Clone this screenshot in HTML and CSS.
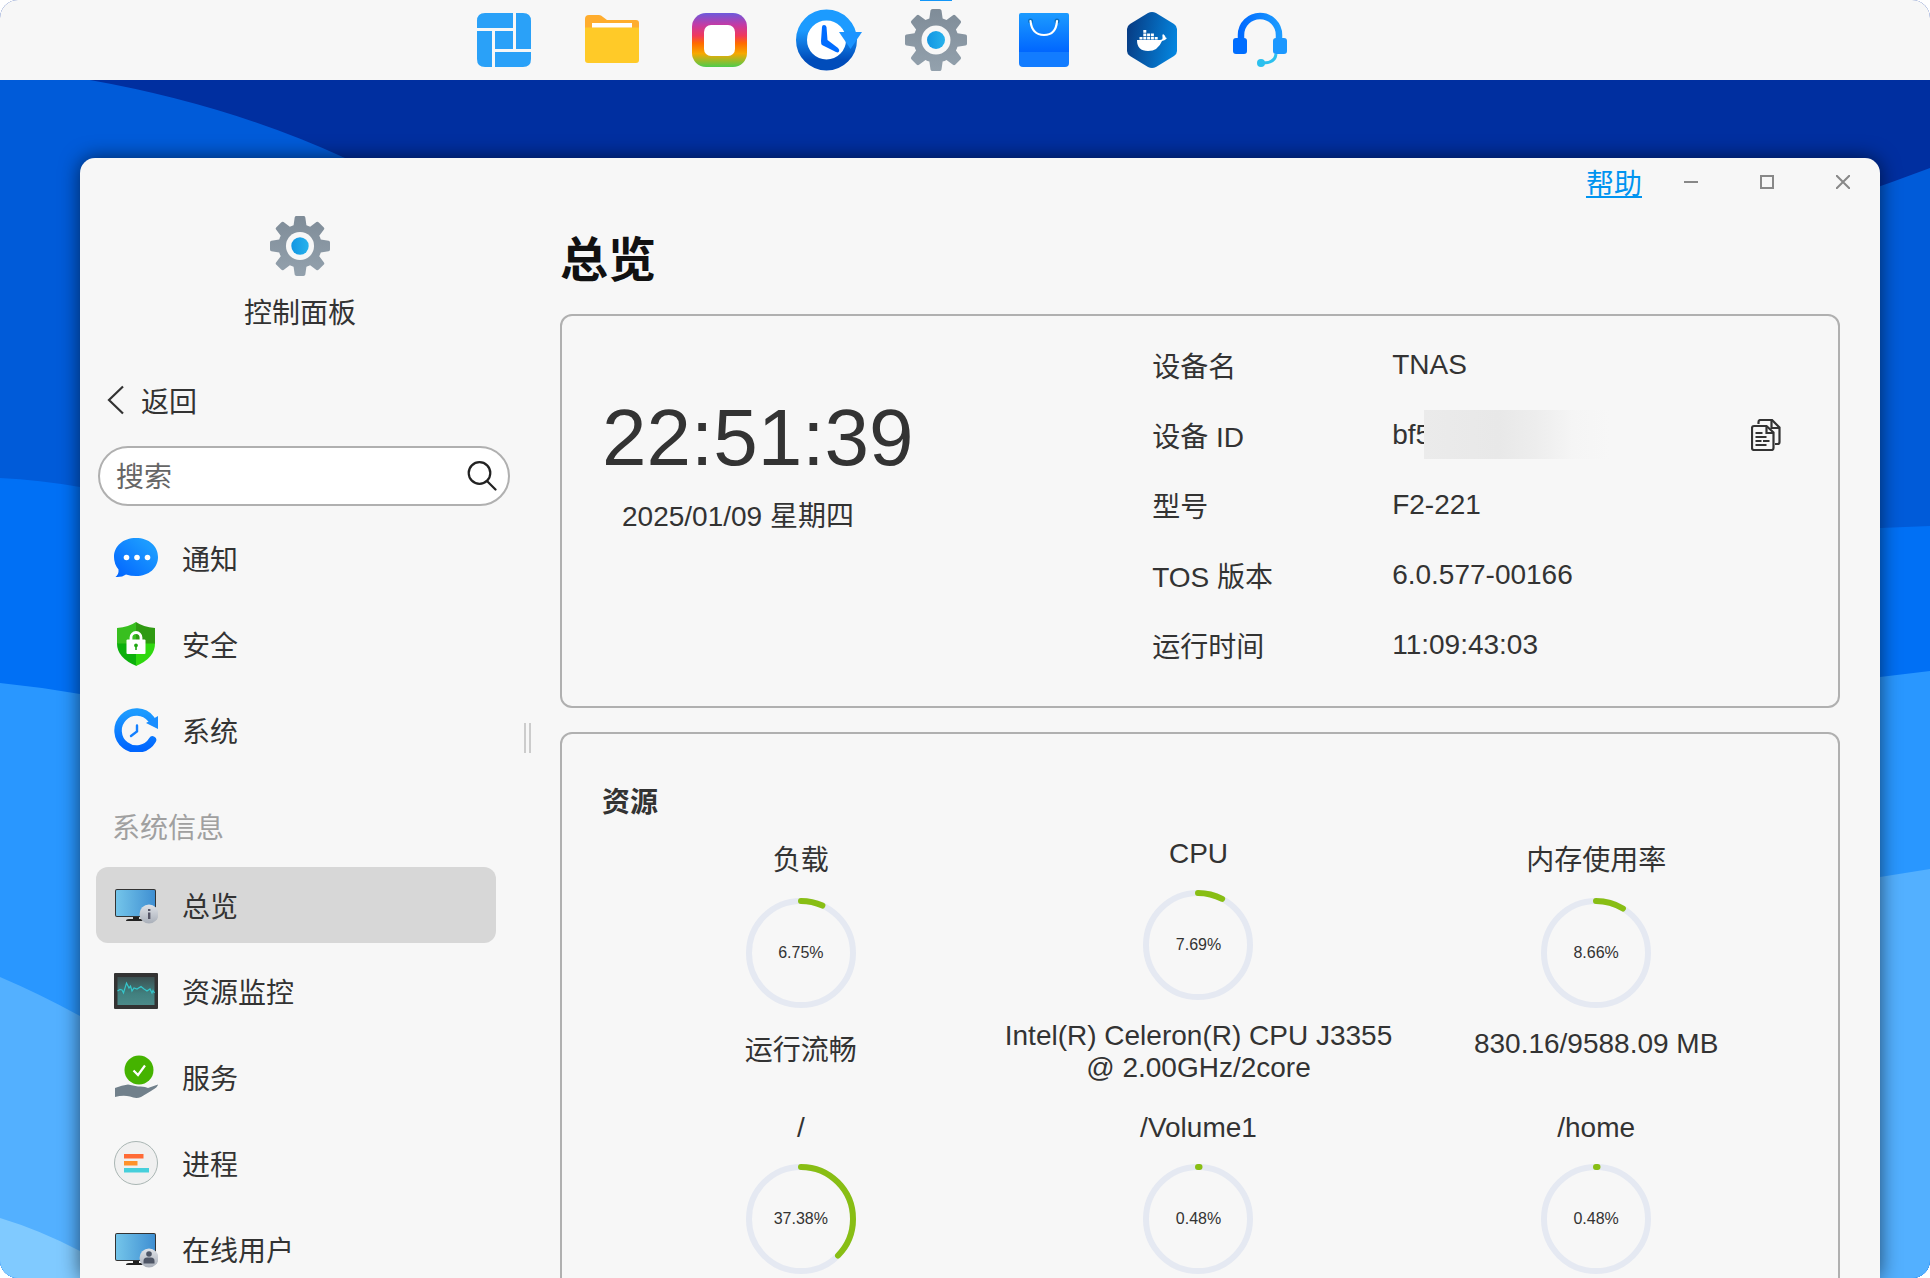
FILE: index.html
```html
<!DOCTYPE html>
<html lang="zh-CN">
<head>
    <meta charset="UTF-8">
    <meta name="viewport" content="width=device-width, initial-scale=1.0">
    <title>控制面板</title>
    <link rel="stylesheet" href="styles.css">
</head>
<body>

<!-- Shared gradients and symbols -->
<svg class="defs" width="0" height="0" aria-hidden="true">
    <defs>
        <linearGradient id="gGear" x1="0" y1="0" x2="0" y2="1"><stop offset="0" stop-color="#7f8c98"/><stop offset="1" stop-color="#93a1ad"/></linearGradient>
        <linearGradient id="gDot"><stop offset="0" stop-color="#1296e3"/><stop offset="1" stop-color="#28b2ec"/></linearGradient>
        <linearGradient id="gBlue" x1="0" y1="0" x2="0" y2="1"><stop offset="0" stop-color="#1c9bff"/><stop offset="1" stop-color="#0066ff"/></linearGradient>
        <linearGradient id="gBlueH"><stop offset="0" stop-color="#006aff"/><stop offset="1" stop-color="#1c9bff"/></linearGradient>
        <linearGradient id="gBubble" x1="0" y1="1" x2="1" y2="0"><stop offset="0" stop-color="#0062ff"/><stop offset=".8" stop-color="#1c9bff"/></linearGradient>
        <linearGradient id="gScreen"><stop offset="0" stop-color="#74c5ea"/><stop offset="1" stop-color="#3f8fd2"/></linearGradient>
        <linearGradient id="gBadge" x1="0" y1="0" x2="0" y2="1"><stop offset="0" stop-color="#e0e3e8"/><stop offset="1" stop-color="#a9afb9"/></linearGradient>
        <clipPath id="gearShape">
            <circle cx="31" cy="31" r="22.500"/>
            <path d="M24 12L25.500 1.500Q25.700 0 27.500 0H34.500Q36.300 0 36.500 1.500L38 12V50L36.500 60.500Q36.300 62 34.500 62H27.500Q25.700 62 25.500 60.500L24 50z"/>
            <path transform="rotate(90 31 31)" d="M24 12L25.500 1.500Q25.700 0 27.500 0H34.500Q36.300 0 36.500 1.500L38 12V50L36.500 60.500Q36.300 62 34.500 62H27.500Q25.700 62 25.500 60.500L24 50z"/>
            <path transform="rotate(45 31 31)" d="M24 12L25.500 1.500Q25.700 0 27.500 0H34.500Q36.300 0 36.500 1.500L38 12V50L36.500 60.500Q36.300 62 34.500 62H27.500Q25.700 62 25.500 60.500L24 50z"/>
            <path transform="rotate(135 31 31)" d="M24 12L25.500 1.500Q25.700 0 27.500 0H34.500Q36.300 0 36.500 1.500L38 12V50L36.500 60.500Q36.300 62 34.500 62H27.500Q25.700 62 25.500 60.500L24 50z"/>
        </clipPath>
        <symbol id="gear" viewBox="0 0 62 62">
            <rect width="62" height="62" fill="url(#gGear)" clip-path="url(#gearShape)"/>
            <circle cx="31" cy="31" r="14.500" fill="#f7f7f7"/>
            <circle cx="31" cy="31" r="9" fill="url(#gDot)"/>
        </symbol>
        <symbol id="monitor" viewBox="0 0 44 44">
            <path d="M19 33h6v3h4q3 0 3 2H12q0-2 3-2h4z" fill="#222"/>
            <rect x="1" y="6" width="41" height="28" rx="2" fill="#333"/>
            <rect x="2" y="7" width="39" height="26" rx="1" fill="url(#gScreen)"/>
            <circle cx="35" cy="31" r="9.500" fill="url(#gBadge)"/>
        </symbol>
    </defs>
</svg>

<div class="desktop">
    <svg class="wallpaper" viewBox="0 0 1930 1278" preserveAspectRatio="none" aria-hidden="true">
        <rect width="1930" height="1278" fill="#002fa0"/>
        <path fill="#005bd9" d="M0 70H50Q90 80 90 80Q230 105 345 158Q700 330 1100 330Q1500 330 1930 168V1278H0z"/>
        <path fill="#0070f5" d="M0 478Q40 480 80 487Q900 620 1880 528L1930 526V1278H0z"/>
        <path fill="#2997ff" d="M0 683Q40 687 80 694Q900 850 1880 677L1930 671V1278H0z"/>
        <path fill="#53b0ff" d="M0 977Q40 994 80 1016Q900 1200 1880 877L1930 869V1278H0z"/>
        <path fill="#80caff" d="M0 1218Q40 1230 80 1251L180 1278H0z"/>
    </svg>

    <header class="taskbar">
        <button class="app" aria-label="桌面">
            <svg viewBox="0 0 66 66"><g fill="#2aa1f8">
                <path d="M14 6H42V21H6V14Q6 6 14 6zM45 6H52Q60 6 60 14V42H45zM6 24H21V60H14Q6 60 6 52zM24 24H42V42H24zM24 45H60V52Q60 60 52 60H24z"/>
            </g></svg>
        </button>
        <button class="app" aria-label="文件管理">
            <svg viewBox="0 0 66 66">
                <path d="M6 12Q6 8 10 8H20Q22 8 24 10L28 13H57Q60 13 60 16V30H6z" fill="#ffad2e"/>
                <path d="M6 20.500H60V53Q60 56 57 56H9Q6 56 6 53z" fill="#ffca28"/>
                <rect x="13" y="16" width="40" height="4.500" fill="#fff"/>
            </svg>
        </button>
        <button class="app" aria-label="相册">
            <svg viewBox="0 0 66 66">
                <linearGradient id="gPhoto" x1="0" y1="0" x2="0" y2="1">
                    <stop offset="0" stop-color="#6c5adb"/><stop offset=".22" stop-color="#c43aa5"/><stop offset=".42" stop-color="#f0395c"/><stop offset=".56" stop-color="#ff6a00"/><stop offset=".75" stop-color="#f7a800"/><stop offset="1" stop-color="#4dcc4d"/>
                </linearGradient>
                <rect x="5" y="6" width="55" height="54" rx="14" fill="url(#gPhoto)"/>
                <rect x="17" y="18" width="31" height="31" rx="7" fill="#fff"/>
            </svg>
        </button>
        <button class="app" aria-label="备份">
            <svg viewBox="0 0 66 66">
                <linearGradient id="gBackup" x1="0" y1="0" x2="0" y2="1"><stop offset=".3" stop-color="#1c9bff"/><stop offset=".9" stop-color="#004cba"/></linearGradient>
                <circle cx="31.500" cy="33" r="25" fill="#fff" stroke="url(#gBackup)" stroke-width="11"/>
                <path d="M44 25H67L55.500 42z" fill="#1c94ff"/>
                <path d="M27 20Q27 18 29 18T31.500 20L32.500 33L43 41Q45 43 44 44.500T41 45L27 38Q26 37 26 34z" fill="#006cff"/>
            </svg>
        </button>
        <button class="app app-active" aria-label="控制面板">
            <svg viewBox="-2 -2 66 66"><use href="#gear" width="62" height="62"/></svg>
        </button>
        <button class="app" aria-label="应用中心">
            <svg viewBox="0 0 66 66">
                <path d="M8 8Q8 6 10 6H56Q58 6 58 8V45H8z" fill="url(#gBlue)"/>
                <path d="M8 45H58V56Q58 60 54 60H12Q8 60 8 56z" fill="#127cff"/>
                <g fill="#0b6fc0"><circle cx="19.500" cy="14" r="2.500"/><circle cx="46" cy="14" r="2.500"/></g>
                <path d="M19.500 14Q21 28 33 28T46 14" fill="none" stroke="#fff" stroke-width="2.200" stroke-linecap="round"/>
            </svg>
        </button>
        <button class="app" aria-label="Docker">
            <svg viewBox="0 0 66 66">
                <linearGradient id="gDocker" y1=".4" y2=".6"><stop offset="0" stop-color="#073d85"/><stop offset="1" stop-color="#0486e0"/></linearGradient>
                <path d="M29 6Q33 4 37 6L55 17Q58 19 58 22V44Q58 47 55 49L37 60Q33 62 29 60L11 49Q8 47 8 44V22Q8 19 11 17z" fill="url(#gDocker)"/>
                <path d="M18 33H41Q44 33 43.500 30Q43 28 44 27Q46 28 47 31Q48 30.500 48 31Q46 34 43 34Q39 44 29 44Q18 44 18 33z" fill="#fff"/>
                <g fill="#fff"><path d="M20.500 30h3v2.500h-3zM24.300 30h3v2.500h-3zM28.100 30h3v2.500h-3zM31.900 30h3v2.500h-3zM35.700 30h3v2.500h-3zM24.300 26.500h3v2.800h-3zM28.100 26.500h3v2.800h-3zM31.900 26.500h3v2.800h-3zM24.300 23h3v2.800h-3z"/></g>
            </svg>
        </button>
        <button class="app" aria-label="技术支持">
            <svg viewBox="0 0 66 66">
                <path d="M14 32V28A19 19 0 0 1 52 28V32" fill="none" stroke="url(#gBlueH)" stroke-width="6.500"/>
                <rect x="6" y="31" width="14" height="16" rx="3" fill="#006eff"/>
                <rect x="46" y="31" width="14" height="16" rx="3" fill="#1c98ff"/>
                <path d="M49 47Q48 56 36 56" fill="none" stroke="#2cc0ee" stroke-width="3"/>
                <circle cx="34" cy="56" r="4" fill="#2cc0ee"/>
            </svg>
        </button>
    </header>

    <div class="window">
        <aside class="sidebar">
            <div class="brand">
                <svg class="brand-icon"><use href="#gear"/></svg>
                <div>控制面板</div>
            </div>

            <button class="back">
                <svg width="18" height="30" viewBox="0 0 18 30"><path d="M16 1.500L2 15L16 28.500" fill="none" stroke="#333" stroke-width="2.200"/></svg>
                返回
            </button>

            <div class="search">
                <input type="text" placeholder="搜索" aria-label="搜索">
                <svg width="30" height="30" viewBox="0 0 30 30" fill="none" stroke="#222" stroke-width="2.200" stroke-linecap="round"><circle cx="12.500" cy="12" r="10.800"/><path d="M20 20L28.500 28.500"/></svg>
            </div>

            <nav class="menu">
                <a href="#">
                    <svg viewBox="0 0 44 44"><path d="M22 2C35 2 44 10 44 21S35 40 22 40Q17 40 12 38.500Q8 41.500 1.500 41Q5 38 4.500 33.500Q0 28 0 21C0 10 9 2 22 2z" fill="url(#gBubble)"/><g fill="#fff"><circle cx="12.500" cy="21.500" r="2.800"/><circle cx="23" cy="21.500" r="2.800"/><circle cx="33.500" cy="21.500" r="2.800"/></g></svg>
                    通知
                </a>
                <a href="#">
                    <svg viewBox="0 0 44 44">
                        <path d="M22 0Q15 5 3 6V22H22z" fill="#38bf1f"/><path d="M22 0Q29 5 41 6V22H22z" fill="#2f9a12"/>
                        <path d="M3 21.500H22.500V44Q3 36 3 21.500z" fill="#0cb00c"/><path d="M41 21.500H22V44Q41 36 41 21.500z" fill="#2fd80f"/>
                        <rect x="12.500" y="17.500" width="19" height="14.500" rx="1" fill="#fff"/>
                        <path d="M17 18V15.500A5 5 0 0 1 27 15.500V18" fill="none" stroke="#fff" stroke-width="2.800"/>
                        <path d="M22 21.500a2 2 0 0 1 .8 3.800V28h-1.600V25.300A2 2 0 0 1 22 21.500z" fill="#1fa812"/>
                    </svg>
                    安全
                </a>
                <a href="#">
                    <svg viewBox="0 0 44 44">
                        <path d="M37 11A18.500 18.500 0 1 0 38.500 32" fill="none" stroke="url(#gBlue)" stroke-width="7.500" stroke-linecap="round"/>
                        <path d="M32 15L44 8V21z" fill="#1a8eff"/>
                        <path d="M23 17.500V23.500L17 28" fill="none" stroke="#1480ff" stroke-width="2.400" stroke-linecap="round"/>
                    </svg>
                    系统
                </a>
                <h3>系统信息</h3>
                <a href="#" class="active">
                    <svg viewBox="0 0 44 44"><use href="#monitor"/><path d="M34 26h2.400v2H34zM34 29.500h2.400V36H34z" fill="#556"/></svg>
                    总览
                </a>
                <a href="#">
                    <svg viewBox="0 0 44 44">
                        <linearGradient id="gMon" x1="0" y1="0" x2="0" y2="1"><stop offset="0" stop-color="#3c4f50"/><stop offset=".6" stop-color="#41807f"/><stop offset="1" stop-color="#4b8a89"/></linearGradient>
                        <rect y="4" width="44" height="36" rx="1" fill="#333"/><rect x="3.500" y="8" width="37" height="28" fill="url(#gMon)"/>
                        <path d="M3.500 22L6 20.500L8 21L9.500 24L12.500 14L15 19L16.500 17L18 22L20 19L23 20L27 17.500L30 20L33 22L36 20L38 24L39 21.500L40.500 24" fill="none" stroke="#35c6cb" stroke-width="1.200"/>
                    </svg>
                    资源监控
                </a>
                <a href="#">
                    <svg viewBox="0 0 44 44">
                        <circle cx="25" cy="15" r="14.500" fill="#45b300"/><path d="M19.500 15.500L24 20L31 10.500" fill="none" stroke="#fff" stroke-width="2.200"/>
                        <path d="M1 33Q8 30 14 29.500L24 31.500Q31 31 34 33L44 29.500Q44 32 37 36L27 42Q22 44 16 41.500Q9 40 1 42z" fill="#71808b"/>
                    </svg>
                    服务
                </a>
                <a href="#">
                    <svg viewBox="0 0 44 44"><circle cx="22" cy="22" r="21.500" fill="#f0f0f0" stroke="#a9b5b3"/><path d="M10 13h19.500v4.500H10z" fill="#ff6a35"/><path d="M10 20h13.500v4.500H10z" fill="#ff922b"/><path d="M10 27h25v4.500H10z" fill="#46cfdb"/></svg>
                    进程
                </a>
                <a href="#">
                    <svg viewBox="0 0 44 44"><use href="#monitor"/><g fill="#4e5565"><circle cx="35" cy="27" r="2.800"/><path d="M29.500 36.500V34Q29.500 30.500 33 30.500H37Q40.500 30.500 40.500 34V36.500z"/></g></svg>
                    在线用户
                </a>
            </nav>
        </aside>

        <div class="splitter"></div>

        <main class="main">
            <div class="titlebar">
                <a href="#" class="help">帮助</a>
                <div class="controls">
                    <button aria-label="最小化"><svg viewBox="0 0 14 14"><path d="M0 7H14"/></svg></button>
                    <button aria-label="最大化"><svg viewBox="0 0 14 14"><path d="M1 1H13V13H1z"/></svg></button>
                    <button aria-label="关闭"><svg viewBox="0 0 14 14"><path d="M0 0L14 14M14 0L0 14"/></svg></button>
                </div>
            </div>

            <div class="content">
                <h1>总览</h1>

                <section class="card device">
                    <div class="clock">
                        <div class="time">22:51:39</div>
                        <div class="date">2025/01/09 星期四</div>
                    </div>
                    <dl class="info">
                        <div><dt>设备名</dt><dd>TNAS</dd></div>
                        <div>
                            <dt>设备 ID</dt>
                            <dd class="device-id">bf5</dd>
                            <dd class="copy-cell">
                                <button class="copy" aria-label="复制">
                                    <svg viewBox="0 0 30 32" fill="none" stroke="#333" stroke-width="2.200">
                                        <path d="M7.500 5V3Q7.500 1 9.500 1H21L28.500 8.500V23Q28.500 25 26.500 25H24"/><path d="M20.500 1.500V9H28"/>
                                        <path d="M3 7H15.500L22.500 13.500V29Q22.500 31 20.500 31H3Q1 31 1 29V9Q1 7 3 7z" fill="#f7f7f7"/><path d="M15.500 7.500V14H22"/>
                                        <path d="M4.500 14H11.500M4.500 18H15.500M4.500 22H10.500M12 22H18.500M4.500 26H15.500"/>
                                    </svg>
                                </button>
                            </dd>
                        </div>
                        <div><dt>型号</dt><dd>F2-221</dd></div>
                        <div><dt>TOS 版本</dt><dd>6.0.577-00166</dd></div>
                        <div><dt>运行时间</dt><dd>11:09:43:03</dd></div>
                    </dl>
                </section>

                <section class="card resources">
                    <h2>资源</h2>
                    <div class="gauges">
                        <div class="gauge">
                            <div>负载</div>
                            <div class="ring"><svg viewBox="0 0 110 110"><circle cx="55" cy="55" r="52"/><circle class="value" cx="55" cy="55" r="52" pathLength="100" stroke-dasharray="6.75 100"/></svg><span>6.75%</span></div>
                            <div>运行流畅</div>
                        </div>
                        <div class="gauge">
                            <div>CPU</div>
                            <div class="ring"><svg viewBox="0 0 110 110"><circle cx="55" cy="55" r="52"/><circle class="value" cx="55" cy="55" r="52" pathLength="100" stroke-dasharray="7.69 100"/></svg><span>7.69%</span></div>
                            <div>Intel(R) Celeron(R) CPU J3355 @ 2.00GHz/2core</div>
                        </div>
                        <div class="gauge">
                            <div>内存使用率</div>
                            <div class="ring"><svg viewBox="0 0 110 110"><circle cx="55" cy="55" r="52"/><circle class="value" cx="55" cy="55" r="52" pathLength="100" stroke-dasharray="8.66 100"/></svg><span>8.66%</span></div>
                            <div>830.16/9588.09 MB</div>
                        </div>
                        <div class="gauge">
                            <div>/</div>
                            <div class="ring"><svg viewBox="0 0 110 110"><circle cx="55" cy="55" r="52"/><circle class="value" cx="55" cy="55" r="52" pathLength="100" stroke-dasharray="37.38 100"/></svg><span>37.38%</span></div>
                        </div>
                        <div class="gauge">
                            <div>/Volume1</div>
                            <div class="ring"><svg viewBox="0 0 110 110"><circle cx="55" cy="55" r="52"/><circle class="value" cx="55" cy="55" r="52" pathLength="100" stroke-dasharray="0.48 100"/></svg><span>0.48%</span></div>
                        </div>
                        <div class="gauge">
                            <div>/home</div>
                            <div class="ring"><svg viewBox="0 0 110 110"><circle cx="55" cy="55" r="52"/><circle class="value" cx="55" cy="55" r="52" pathLength="100" stroke-dasharray="0.48 100"/></svg><span>0.48%</span></div>
                        </div>
                    </div>
                </section>
            </div>
        </main>
    </div>
</div>

</body>
</html>
```

FILE: styles.css
```css
* {
    box-sizing: border-box;
}
body {
    margin: 0;
    background-color: #ffffff;
    font-family: "Liberation Sans", "Noto Sans CJK SC", sans-serif;
    font-size: 28px;
    color: #333333;
}
h1, h2, h3, dl, dd {
    margin: 0;
}
button {
    padding: 0;
    border: none;
    background: none;
    font: inherit;
    color: inherit;
    cursor: pointer;
}
svg {
    display: block;
    flex-shrink: 0;
}
.defs {
    position: absolute;
}
.desktop {
    position: relative;
    display: flex;
    flex-direction: column;
    height: 100vh;
    border-radius: 18px;
    overflow: hidden;
}
.wallpaper {
    position: absolute;
    top: 0;
    left: 0;
    width: 100%;
    height: 100%;
}

/* Taskbar */
.taskbar {
    position: relative;
    display: flex;
    flex-shrink: 0;
    justify-content: center;
    gap: 42px;
    height: 80px;
    padding-right: 166px;
    background-color: #f7f7f7;
}
.app {
    position: relative;
    width: 66px;
}
.app svg {
    width: 66px;
    height: 66px;
    overflow: visible;
}
.app-active::before {
    content: "";
    position: absolute;
    top: 0;
    left: 17px;
    width: 32px;
    height: 1px;
    background-color: #1296f8;
}

/* Window */
.window {
    position: relative;
    display: flex;
    flex: 1;
    min-height: 0;
    margin: 78px 50px 0 80px;
    border-radius: 15px 15px 0 0;
    background-color: #f7f7f7;
    box-shadow: 0 0 20px rgba(0, 0, 0, 0.6);
}
.sidebar {
    flex-shrink: 0;
    width: 440px;
    padding: 58px 16px 0;
    overflow: hidden;
}
.brand {
    display: flex;
    flex-direction: column;
    align-items: center;
    gap: 15px;
}
.brand-icon {
    width: 60px;
    height: 60px;
}
.back {
    display: flex;
    align-items: center;
    gap: 16px;
    margin: 49px 0 26px 11px;
}
.search {
    display: flex;
    align-items: center;
    width: 412px;
    height: 60px;
    margin-left: 2px;
    padding: 0 11px 0 16px;
    border: 2px solid #b0b0b0;
    border-radius: 30px;
    background-color: #ffffff;
}
.search input {
    flex: 1;
    min-width: 0;
    padding: 3px 0 0;
    border: none;
    outline: none;
    background: none;
    font: inherit;
}
.search input::placeholder {
    color: #666666;
}
.menu {
    width: 400px;
    margin-top: 14px;
}
.menu a {
    display: flex;
    align-items: center;
    gap: 24px;
    height: 76px;
    margin-bottom: 10px;
    padding-left: 18px;
    border-radius: 12px;
    color: #333333;
    text-decoration: none;
}
.menu a.active {
    background-color: #d7d7d7;
}
.menu svg {
    width: 44px;
    height: 44px;
}
.menu h3 {
    margin: 38px 16px 21px;
    font-size: 28px;
    font-weight: normal;
    color: #a0a0a0;
}
.splitter {
    align-self: center;
    flex-shrink: 0;
    width: 7px;
    height: 30px;
    margin: 40px 0 0 4px;
    border: solid #cccccc;
    border-width: 0 2px;
}
.main {
    flex: 1;
    min-width: 0;
    overflow: hidden;
}
.titlebar {
    display: flex;
    align-items: center;
    justify-content: flex-end;
    gap: 31px;
    height: 48px;
    padding-right: 19px;
}
.help {
    color: #0094f0;
}
.controls {
    display: flex;
    gap: 40px;
}
.controls button {
    display: flex;
    align-items: center;
    justify-content: center;
    width: 36px;
    height: 36px;
}
.controls svg {
    width: 14px;
    height: 14px;
    fill: none;
    stroke: #888888;
    stroke-width: 2;
}

/* Overview */
.content {
    padding: 15px 40px 0 29px;
}
h1 {
    margin-bottom: 23px;
    font-size: 48px;
    color: #111111;
}
.card {
    margin-bottom: 24px;
    border: 2px solid #b0b0b0;
    border-radius: 12px;
}
.device {
    display: grid;
    grid-template-columns: 46% 54%;
    padding: 14px 40px 26px;
}
.clock {
    padding-top: 62px;
}
.time {
    font-size: 80px;
}
.date {
    margin-top: 10px;
    padding-left: 20px;
}
.info > div {
    display: flex;
    align-items: center;
    height: 70px;
    padding-right: 17px;
}
.info dt {
    width: 240px;
}
.device-id {
    position: relative;
}
/* Masks the rest of the id */
.device-id::after {
    content: "";
    position: absolute;
    top: -9px;
    left: 32px;
    width: 186px;
    height: 49px;
    background: linear-gradient(to right, #ebebeb, #e8e8e8 40%, #ededed 60%, #f5f5f5 80%, #f7f7f7);
}
.copy-cell {
    margin-left: auto;
}
.copy {
    display: block;
}
.copy svg {
    width: 30px;
    height: 32px;
}
.resources {
    padding: 46px 43px 28px 40px;
}
h2 {
    margin-bottom: 18px;
    font-size: 28px;
}
.gauges {
    display: grid;
    grid-template-columns: repeat(3, 1fr);
    row-gap: 28px;
}
.gauge {
    display: flex;
    flex-direction: column;
    align-items: center;
    gap: 20px;
    text-align: center;
}
.ring {
    position: relative;
    width: 110px;
    height: 110px;
}
.ring circle {
    fill: none;
    stroke: #e5e9f2;
    stroke-width: 6;
    transform: rotate(-90deg);
    transform-origin: center;
}
.ring .value {
    stroke: #88be14;
    stroke-linecap: round;
}
.ring span {
    position: absolute;
    inset: 0;
    display: flex;
    align-items: center;
    justify-content: center;
    font-size: 16px;
}
```
